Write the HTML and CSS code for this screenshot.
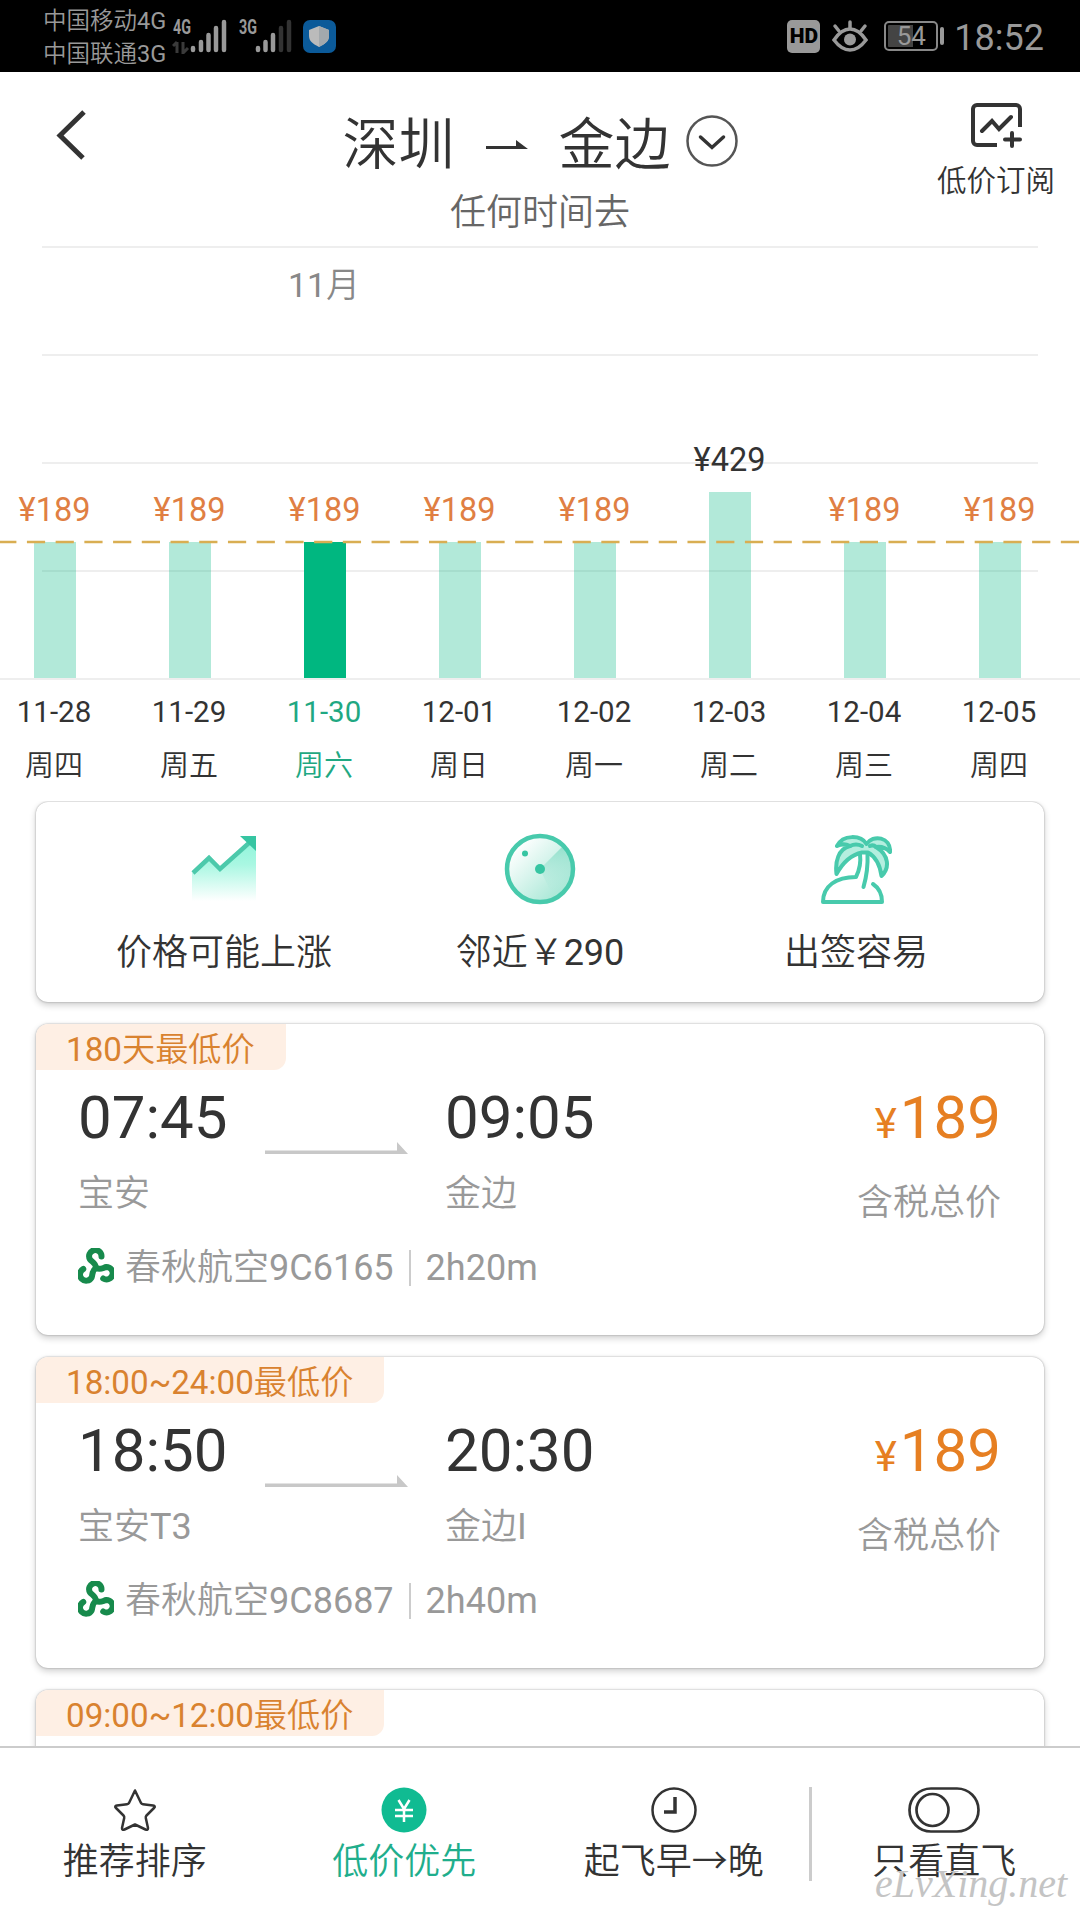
FILE: index.html
```html
<!DOCTYPE html>
<html lang="zh-CN">
    <head>
        <meta charset="UTF-8">
        <title>低价机票</title>
        <link rel="stylesheet" href="styles.css">
    </head>
    <body>
        <!--状态栏-->
        <div class="status-bar">
            <div class="carriers">
                <div>中国移动4G</div>
                <div>中国联通3G</div>
            </div>
            <svg class="signals" width="170" height="36" viewBox="0 0 170 36">
                <text x="1" y="16" textLength="18" lengthAdjust="spacingAndGlyphs" class="net">4G</text>
                <path d="M5 24v11M5 24l-4 4M11 24v11l5-5" stroke="#3a3a3a" stroke-width="3" fill="none"/>
                <g stroke="#999" stroke-width="4.500" stroke-linecap="round">
                    <path d="M21 30v2M29 24v8M36.500 17v15M44 10v22M52 4v28"/>
                    <path d="M86 30v2M93.500 24v8M101 17v15"/>
                    <path d="M109 10v22M117 4v28" stroke="#333"/>
                </g>
                <text x="67" y="16" textLength="18" lengthAdjust="spacingAndGlyphs" class="net">3G</text>
                <rect x="131" y="2" width="33" height="33" rx="7" fill="#0b5a99"/>
                <path d="M147 8l10 4v6c0 5-4 8-10 11c-6-3-10-6-10-11v-6z" fill="#bbb"/>
                <path d="M147 8l10 4v6c0 5-4 8-10 11z" fill="#a3a9ad"/>
            </svg>
            <div class="status-right">
                <span class="hd">HD</span>
                <svg width="36" height="34" viewBox="0 0 36 34" fill="none" stroke="#999" stroke-width="3.500" stroke-linecap="round">
                    <path d="M2 21C8 12 13 10 18 10s10 2 16 11C28 29 23 31 18 31S8 29 2 21z"/>
                    <path d="M18 3v6M3 7l4 5M33 7l-4 5"/>
                    <circle cx="18" cy="20.500" r="6" fill="#999" stroke="none"/>
                </svg>
                <span class="battery">54</span>
                <span class="clock">18:52</span>
            </div>
        </div>

        <!--标题-->
        <header class="header">
            <svg class="back" width="34" height="52" viewBox="0 0 34 52"><path d="M30 3L6 26.500L29 49" fill="none" stroke="#333" stroke-width="5"/></svg>
            <div class="route">
                <div class="route-title">
                    <span>深圳</span>
                    <svg class="route-arrow" width="42" height="10" viewBox="0 0 42 10"><path d="M0 6h30V0l12 9H0z" fill="#333"/></svg>
                    <span>金边</span>
                    <svg class="route-more" width="52" height="52" viewBox="0 0 52 52" fill="none" stroke="#333">
                        <circle cx="26" cy="26" r="24.500" stroke-width="2.500" stroke="#555"/>
                        <path d="M14.500 22L26 32.500L37.500 22" stroke-width="3.500" stroke-linecap="round"/>
                    </svg>
                </div>
                <div class="route-sub">任何时间去</div>
            </div>
            <div class="subscribe">
                <svg width="52" height="46" viewBox="0 0 52 46" fill="none" stroke="#333" stroke-width="4">
                    <path d="M27 42H7a4 4 0 0 1-4-4V6a4 4 0 0 1 4-4h39a4 4 0 0 1 4 4v18"/>
                    <path d="M12 28l10-10l7 8l12-12M42 30v13M35 36.500h15" stroke-linecap="round"/>
                </svg>
                <span>低价订阅</span>
            </div>
        </header>

        <!--价格走势-->
        <section class="chart">
            <div class="plot">
                <div class="grid-lines"></div>
                <div class="month">11月</div>
                <div class="bars">
                    <div class="col"><span class="price">¥189</span><i style="height: 136px"></i></div>
                    <div class="col"><span class="price">¥189</span><i style="height: 136px"></i></div>
                    <div class="col active"><span class="price">¥189</span><i style="height: 136px"></i></div>
                    <div class="col"><span class="price">¥189</span><i style="height: 136px"></i></div>
                    <div class="col"><span class="price">¥189</span><i style="height: 136px"></i></div>
                    <div class="col high"><span class="price">¥429</span><i style="height: 186px"></i></div>
                    <div class="col"><span class="price">¥189</span><i style="height: 136px"></i></div>
                    <div class="col"><span class="price">¥189</span><i style="height: 136px"></i></div>
                </div>
                <svg class="low-line" width="1080" height="4" viewBox="0 0 1080 4"><path d="M-1.800 2H1080" stroke="#d9ae52" stroke-width="2.500" stroke-dasharray="18.200 10.520"/></svg>
            </div>
            <div class="days">
                <div>11-28<b>周四</b></div>
                <div>11-29<b>周五</b></div>
                <div class="active">11-30<b>周六</b></div>
                <div>12-01<b>周日</b></div>
                <div>12-02<b>周一</b></div>
                <div>12-03<b>周二</b></div>
                <div>12-04<b>周三</b></div>
                <div>12-05<b>周四</b></div>
            </div>
        </section>

        <main class="list">
            <div class="card tips">
                <div class="tip">
                    <svg width="72" height="74" viewBox="0 0 72 74">
                        <defs>
                            <linearGradient id="rise" x1="0" y1="0" x2="0" y2="1">
                                <stop offset="0" stop-color="#8ff5da"/><stop offset=".4" stop-color="#a9f7e2"/><stop offset="1" stop-color="#fff"/>
                            </linearGradient>
                        </defs>
                        <path d="M4 41L21 26L32 38L68 8V69H4z" fill="url(#rise)"/>
                        <path d="M5 41L21 26L32 37L61 11" fill="none" stroke="#4cc9ab" stroke-width="4.500"/>
                        <path d="M52 4h16v15z" fill="#36c5a2"/>
                    </svg>
                    <span>价格可能上涨</span>
                </div>
                <div class="tip">
                    <svg width="72" height="74" viewBox="0 0 72 74">
                        <defs>
                            <linearGradient id="radar" x1="0" y1="0" x2="1" y2="1">
                                <stop offset=".15" stop-color="#fff"/><stop offset="1" stop-color="#95e2cd"/>
                            </linearGradient>
                            <linearGradient id="sweep" x1="0" y1="0" x2="0" y2="1">
                                <stop offset="0" stop-color="#93e0cc"/><stop offset="1" stop-color="#b5ebde" stop-opacity="0"/>
                            </linearGradient>
                        </defs>
                        <circle cx="36" cy="37" r="33" fill="url(#radar)"/>
                        <path d="M36 37L59 14A33 33 0 0 1 50 67z" fill="url(#sweep)"/>
                        <circle cx="36" cy="37" r="33" fill="none" stroke="#48caac" stroke-width="4.500"/>
                        <circle cx="36" cy="37" r="5" fill="#36c5a2"/>
                        <circle cx="21" cy="21.500" r="3" fill="#36c5a2"/>
                    </svg>
                    <span>邻近￥290</span>
                </div>
                <div class="tip">
                    <svg width="72" height="74" viewBox="0 0 72 74" fill="none" stroke="#48caac" stroke-width="4" stroke-linecap="round" stroke-linejoin="round">
                        <path d="M40 22C41 30 39 39 36 45C16 45 3 54 3 70H62C62 62 59 56 53 52M43.500 55C47 43 48 33 47.500 22"/>
                        <path d="M46.500 12C41 3 23 2 17 14C21 12 26 12 30 14C18 17 15 30 16.500 42C22 32 30 23 42 20.500L48 20.500C56 25 60 33 61.500 44C70 36 69 23 56 15C62 14 66 16 70 20C71 5 53 2 46.500 12z" fill="#b4eedf"/>
                        <path d="M30 14C34 12 38 12 42 14M56 15C54 13 52 13 50 14"/>
                    </svg>
                    <span>出签容易</span>
                </div>
            </div>

            <div class="card flight">
                <div class="tag">180天最低价</div>
                <div class="flight-main">
                    <div class="stop"><strong>07:45</strong><span>宝安</span></div>
                    <svg class="fly-arrow" width="144" height="12" viewBox="0 0 144 12"><path d="M0 8.500h132V0l11 12H0z" fill="#c8c8c8"/></svg>
                    <div class="stop"><strong>09:05</strong><span>金边</span></div>
                    <div class="total"><strong><small>¥</small>189</strong><span>含税总价</span></div>
                </div>
                <div class="airline">
                    <svg width="36" height="36" viewBox="0 0 36 36"><use href="#spring"/></svg>
                    <span class="name">春秋航空9C6165</span><span class="duration">2h20m</span>
                </div>
            </div>

            <div class="card flight">
                <div class="tag">18:00~24:00最低价</div>
                <div class="flight-main">
                    <div class="stop"><strong>18:50</strong><span>宝安T3</span></div>
                    <svg class="fly-arrow" width="144" height="12" viewBox="0 0 144 12"><path d="M0 8.500h132V0l11 12H0z" fill="#c8c8c8"/></svg>
                    <div class="stop"><strong>20:30</strong><span>金边I</span></div>
                    <div class="total"><strong><small>¥</small>189</strong><span>含税总价</span></div>
                </div>
                <div class="airline">
                    <svg width="36" height="36" viewBox="0 0 36 36"><use href="#spring"/></svg>
                    <span class="name">春秋航空9C8687</span><span class="duration">2h40m</span>
                </div>
            </div>

            <div class="card flight">
                <div class="tag">09:00~12:00最低价</div>
            </div>
        </main>

        <!--底部排序-->
        <nav class="sort-bar">
            <div class="sort">
                <svg width="46" height="46" viewBox="0 0 46 46"><path d="M23 3.500L29 16Q29.500 17 31 17.200L41 18.500Q44 19 42 21L34.500 28.500Q33.500 29.500 33.800 31L36 41Q36 43.500 33.500 42.500L23 37.500L12.500 42.500Q10 43.500 10 41L12.200 31Q12.500 29.500 11.500 28.500L4 21Q2 19 5 18.500L15 17.200Q16.500 17 17 16z" fill="none" stroke="#333" stroke-width="2.500" stroke-linejoin="round"/></svg>
                <span>推荐排序</span>
            </div>
            <div class="sort active">
                <svg width="46" height="46" viewBox="0 0 46 46"><circle cx="23" cy="23" r="22.500" fill="#10bb92"/><path d="M17.500 13L23 22L28.500 13M23 22v13M14 23h18M14 29h18" fill="none" stroke="#fff" stroke-width="2.500"/></svg>
                <span>低价优先</span>
            </div>
            <div class="sort">
                <svg width="46" height="46" viewBox="0 0 46 46" fill="none" stroke="#333"><circle cx="23" cy="23" r="21.500" stroke-width="2.500"/><path d="M24 10v15H13" stroke-width="3.500"/></svg>
                <span>起飞早→晚</span>
            </div>
            <div class="sort only-direct">
                <svg width="72" height="46" viewBox="0 0 72 46" fill="none" stroke="#333" stroke-width="2.700"><rect x="1.500" y="1.500" width="69" height="43" rx="21.500"/><circle cx="24.500" cy="23" r="16"/></svg>
                <span>只看直飞</span>
            </div>
            <div class="watermark">eLvXing.net</div>
        </nav>

        <svg width="0" height="0" class="symbols">
            <symbol id="spring" viewBox="0 0 36 36">
                <g fill="none" stroke="#178a4c" stroke-width="6" stroke-linecap="round">
                    <path id="hook" d="M23.500 8.500A6.200 6.200 0 1 0 12 11.500C14 14 18 15 18 20"/>
                    <use href="#hook" transform="rotate(120 18 20)"/>
                    <use href="#hook" transform="rotate(240 18 20)"/>
                </g>
            </symbol>
        </svg>
    </body>
</html>
```
FILE: styles.css
```css
* {
    box-sizing: border-box;
}
body {
    font-family: Roboto, "Noto Sans CJK SC DemiLight", "Noto Sans CJK SC", sans-serif;
    margin: 0;
    width: 1080px;
    height: 1920px;
    overflow: hidden;
    display: flex;
    flex-direction: column;
    background: #fff;
    color: #333;
}
svg {
    display: block;
    flex-shrink: 0;
}
.symbols {
    position: absolute;
}
/* 状态栏 */
.status-bar {
    height: 72px;
    flex-shrink: 0;
    padding: 0 36px 0 43px;
    display: flex;
    align-items: center;
    background: #000;
    color: #999;
}
.carriers {
    width: 129px;
    padding-top: 3px;
    font-size: 23.5px;
    line-height: 33px;
    white-space: nowrap;
}
.net {
    font-size: 20px;
    font-weight: bold;
    fill: #999;
}
.status-right {
    margin-left: auto;
    display: flex;
    align-items: center;
}
.hd {
    width: 33px;
    height: 33px;
    margin-right: 12px;
    border-radius: 5px;
    background: #999;
    color: #000;
    font-size: 21px;
    font-weight: 900;
    line-height: 33px;
    text-align: center;
}
.battery {
    position: relative;
    width: 54px;
    height: 30px;
    margin: 0 16px 0 16px;
    border: 2px solid #888;
    border-radius: 5px;
    background: linear-gradient(90deg, #444 54%, #000 54%);
    background-clip: content-box;
    padding: 2px;
    font-size: 26px;
    line-height: 23px;
    text-align: center;
}
.battery::after {
    content: "";
    position: absolute;
    left: 54px;
    top: 4px;
    width: 4px;
    height: 18px;
    border-radius: 2px;
    background: #999;
}
.clock {
    padding-top: 3px;
    font-size: 36px;
}
/* 标题 */
.header {
    height: 174px;
    flex-shrink: 0;
    display: grid;
    grid-template-columns: 1fr auto 1fr;
}
.back {
    margin: 37px 0 0 54px;
}
.route-title {
    display: flex;
    align-items: center;
    padding-top: 33px;
    font-size: 56px;
    line-height: 80px;
}
.route-arrow {
    margin: 0 31px;
}
.route-more {
    margin: -8px 0 0 15px;
}
.route-sub {
    font-size: 36px;
    line-height: 40px;
    margin-top: 8px;
    text-align: center;
    color: #666;
}
.subscribe {
    justify-self: end;
    padding: 31px 25px 0 0;
    display: flex;
    flex-direction: column;
    align-items: center;
    gap: 10px;
    font-size: 29.5px;
    line-height: 44px;
}
/* 价格走势 */
.chart {
    height: 555px;
    flex-shrink: 0;
}
.plot {
    position: relative;
    height: 434px;
    border-bottom: 2px solid #eee;
}
.grid-lines {
    position: absolute;
    left: 42px;
    right: 42px;
    top: 0;
    height: 330px;
    background: repeating-linear-gradient(#eee 0 2px, transparent 2px 108px);
}
.month {
    position: absolute;
    left: 324px;
    top: 16px;
    transform: translateX(-50%);
    font-size: 34px;
    line-height: 46px;
    color: #888;
}
.bars,
.days {
    display: grid;
    grid-template-columns: repeat(8, 135px);
    margin-left: -12.5px;
}
.bars {
    position: relative;
    height: 432px;
}
.col {
    display: flex;
    flex-direction: column;
    justify-content: flex-end;
    align-items: center;
}
.col i {
    width: 42px;
    background: rgba(0, 183, 128, .3);
}
.col.active i {
    background: #00b780;
}
.price {
    font-size: 32.5px;
    line-height: 38px;
    margin: 0 1px 13px 0;
    color: #e07f43;
}
.high .price {
    color: #333;
}
.low-line {
    position: absolute;
    left: 0;
    top: 294px;
}
.days {
    margin-left: -13.5px;
    padding-top: 12px;
    text-align: center;
    font-size: 29.5px;
    line-height: 40px;
}
.days b {
    display: block;
    margin-top: 14px;
    font-size: 29px;
    font-weight: 400;
}
.days .active {
    color: #1fa882;
}
/* 列表 */
.list {
    flex: 1;
    min-height: 0;
    overflow: hidden;
    padding: 1px 36px 0;
}
.card {
    overflow: hidden;
    margin-bottom: 22px;
    border-radius: 12px;
    background: #fff;
    box-shadow: 0 0 2px rgba(0, 0, 0, .35), 0 3px 7px rgba(0, 0, 0, .2);
}
.tips {
    height: 200px;
    padding: 30px 30px 0;
    display: grid;
    grid-template-columns: repeat(3, 1fr);
    font-size: 36px;
    line-height: 48px;
}
.tip {
    display: flex;
    flex-direction: column;
    align-items: center;
    gap: 23px;
}
.flight {
    height: 311px;
}
.tag {
    width: fit-content;
    height: 46px;
    padding: 0 31px 0 30px;
    border-radius: 0 0 12px 0;
    background: #feefe4;
    color: #d9822f;
    font-size: 33.2px;
    line-height: 52px;
}
.flight-main {
    display: flex;
    height: 156px;
    padding: 13px 43px 0 42px;
}
.flight-main strong {
    display: block;
    font-size: 60px;
    font-weight: 400;
    line-height: 70px;
}
.flight-main span {
    display: block;
    font-size: 36px;
    line-height: 44px;
    color: #999;
}
.stop {
    width: 185px;
}
.stop span {
    margin-top: 19px;
}
.fly-arrow {
    margin: 59px 36px 0 2px;
}
.total {
    margin-left: auto;
    text-align: right;
}
.total strong {
    color: #e67f22;
}
.total small {
    font-size: 42px;
    margin-right: 3px;
}
.total span {
    margin-top: 22px;
}
.airline {
    display: flex;
    align-items: center;
    height: 76px;
    padding: 8px 0 0 42px;
    font-size: 36px;
    color: #999;
}
.airline svg {
    margin-top: -4px;
}
.name {
    margin-left: 11px;
    padding-right: 15px;
    border-right: 2px solid #ccc;
    line-height: 36px;
}
.duration {
    margin-left: 15px;
}
/* 底部排序 */
.sort-bar {
    position: relative;
    height: 174px;
    flex-shrink: 0;
    display: grid;
    grid-template-columns: repeat(3, 269.5px) 1fr;
    padding-top: 39px;
    border-top: 2px solid #ccc;
    background: #fff;
}
.sort {
    height: 94px;
    display: flex;
    flex-direction: column;
    align-items: center;
    gap: 5px;
    font-size: 36px;
    line-height: 48px;
}
.sort.active {
    color: #1fae8c;
}
.only-direct {
    padding-right: 3px;
    border-left: 3px solid #ccc;
}
.watermark {
    position: absolute;
    left: 875px;
    top: 112px;
    font: italic 40px "Liberation Serif", serif;
    color: #c4c4c4;
}
```
